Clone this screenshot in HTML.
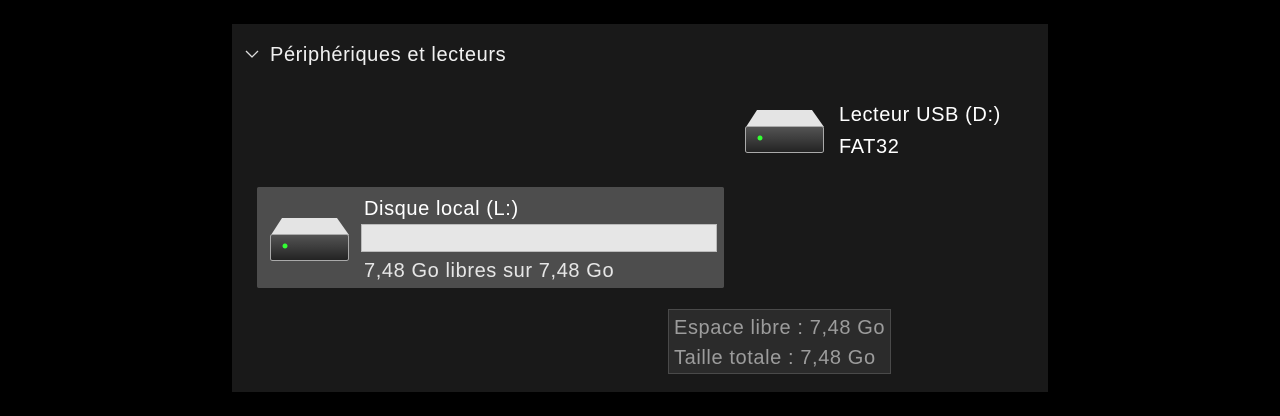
<!DOCTYPE html>
<html><head><meta charset="utf-8"><style>
body{margin:0;width:1280px;height:416px;background:#000;font-family:"Segoe UI","Liberation Sans",sans-serif;color:#fff;position:relative;overflow:hidden}
.p{position:absolute;left:232px;top:24px;width:816px;height:368px;background:#191919}
.t{position:absolute;font-size:20px;letter-spacing:0.6px;white-space:nowrap;line-height:24px}
</style></head><body>
<div class="p"></div>
<svg style="position:absolute;left:245px;top:49px" width="14" height="10"><path d="M1 2 L7 8 L13 2" stroke="#ddd" stroke-width="1.3" fill="none"/></svg>
<div class="t" style="left:270px;top:43px;color:#f0f0f0">Périphériques et lecteurs</div>

<svg style="position:absolute;left:745px;top:110px" width="80" height="44">
<defs><linearGradient id="b" x1="0" y1="0" x2="0" y2="1"><stop offset="0" stop-color="#555"/><stop offset="1" stop-color="#222"/></linearGradient></defs>
<path d="M12 0 H67 L79 17 H1 Z" fill="#e4e4e4"/>
<rect x="0.5" y="16.5" width="78" height="26" rx="2" fill="url(#b)" stroke="#aaa"/>
<circle cx="15" cy="28" r="2.5" fill="#3f3"/>
</svg>
<div class="t" style="left:839px;top:103px">Lecteur USB (D:)</div>
<div class="t" style="left:839px;top:135px">FAT32</div>

<div style="position:absolute;left:257px;top:187px;width:467px;height:101px;background:#4d4d4d;border-radius:2px"></div>
<svg style="position:absolute;left:270px;top:218px" width="80" height="44">
<path d="M12 0 H67 L79 17 H1 Z" fill="#e4e4e4"/>
<rect x="0.5" y="16.5" width="78" height="26" rx="2" fill="url(#b)" stroke="#aaa"/>
<circle cx="15" cy="28" r="2.5" fill="#3f3"/>
</svg>
<div class="t" style="left:364px;top:197px">Disque local (L:)</div>
<div style="position:absolute;left:361px;top:224px;width:354px;height:26px;background:#e6e6e6;border:1px solid #bbb"></div>
<div class="t" style="left:364px;top:259px;color:#e6e6e6">7,48 Go libres sur 7,48 Go</div>

<div style="position:absolute;left:668px;top:309px;width:221px;height:63px;background:#2b2b2b;border:1px solid #4a4a4a"></div>
<div class="t" style="left:674px;top:316px;color:#9c9c9c">Espace libre : 7,48 Go</div>
<div class="t" style="left:674px;top:346px;color:#9c9c9c">Taille totale : 7,48 Go</div>
</body></html>
